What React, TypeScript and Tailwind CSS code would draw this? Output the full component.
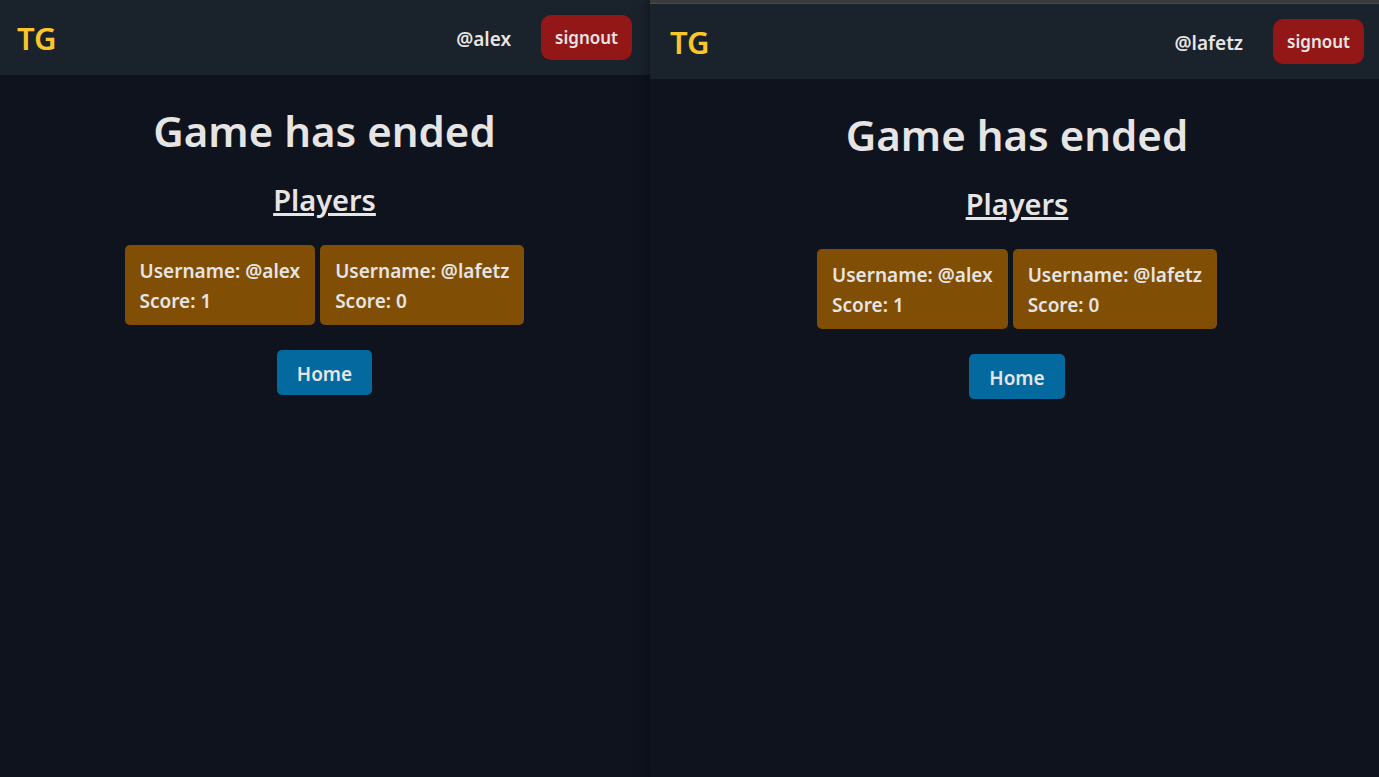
import React from "react";

type Player = { username: string; score: number };

const players: Player[] = [
  { username: "alex", score: 1 },
  { username: "lafetz", score: 0 },
];

function Header({ user, className }: { user: string; className: string }) {
  return (
    <header className={`flex items-center justify-between bg-[#1a222c] py-[15px] ${className}`}>
      <a href="#home" className="pt-0.5 text-[31px] leading-[43px] font-semibold text-[#fbc62a]">TG</a>
      <div className="flex items-center gap-[30px]">
        <span className="pt-0.5 text-[19px] leading-[30px] font-semibold">@{user}</span>
        <button type="button" className="h-[45px] rounded-[10px] bg-[#931717] px-[14px] text-[17px] font-semibold">
          signout
        </button>
      </div>
    </header>
  );
}

function Game({ className }: { className: string }) {
  return (
    <main className={`flex flex-col items-center pt-[26px] ${className}`}>
      <h1 className="text-[42px] leading-[60px] font-semibold">Game has ended</h1>
      <h2 className="mt-[21px] text-[29px] leading-9 font-semibold underline decoration-3">Players</h2>
      <ul className="mt-[27px] flex gap-[5px]">
        {players.map((p) => (
          <li key={p.username} className="rounded-[5px] bg-[#804e05] px-[15px] pt-[11px] pb-[9px] text-[19px] leading-[30px] font-semibold">
            <p>Username: @{p.username}</p>
            <p>Score: {p.score}</p>
          </li>
        ))}
      </ul>
      <button type="button" className="mt-[25px] h-[45px] rounded-[5px] bg-[#03699f] px-5 pt-1 text-[19px] font-semibold">
        Home
      </button>
    </main>
  );
}

export default function App() {
  return (
    <div className="flex min-h-screen overflow-hidden bg-[#0f131e] font-['Noto_Sans',sans-serif] text-[#e7e5e4]">
      <section className="flex-650">
        <Header user="alex" className="pr-[18px] pl-[17px]" />
        <Game className="pr-px" />
      </section>
      <section className="relative flex-729 bg-[#0f131e] shadow-[0_0_12px_rgba(0,0,0,0.5)]">
        <div className="h-1 border-b border-[#4a4a4a] bg-[#3b3b3b]" />
        <Header user="lafetz" className="pr-[15px] pl-5" />
        <Game className="pl-[5px]" />
      </section>
    </div>
  );
}
